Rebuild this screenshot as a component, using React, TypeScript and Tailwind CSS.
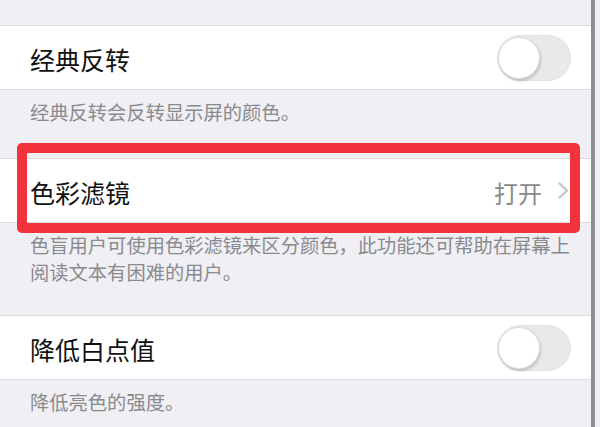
import React from "react";

const FONT = { fontFamily: '"Noto Sans CJK SC", "Noto Sans", sans-serif' };

function Toggle() {
  return (
    <div className="relative w-[74px] h-[46px] rounded-full bg-[#e9e9eb] border border-[#e2e2e5]">
      <div className="absolute left-0 top-[1px] w-[42px] h-[42px] rounded-full bg-white border border-[#dcdcdf] shadow-[1px_2px_3px_rgba(0,0,0,0.18)]" />
    </div>
  );
}

function Row({ label, children }: { label: string; children?: React.ReactNode }) {
  return (
    <div className="h-[65px] shrink-0 bg-white border-y border-[#dcdce0] flex items-center pl-[30px] pr-[20px]">
      <span className="flex-1 text-[25px] leading-none text-[#111] pt-[4px]">{label}</span>
      {children}
    </div>
  );
}

function Caption({ lines, height }: { lines: string[]; height: string }) {
  return (
    <div className={`${height} pl-[30px] pt-[9px] text-[19.3px] leading-[27px] text-[#8a8a8e] whitespace-nowrap`}>
      {lines.map((l) => (
        <div key={l}>{l}</div>
      ))}
    </div>
  );
}

export default function App() {
  return (
    <div className="w-[600px] h-[427px] overflow-hidden bg-[#efeff4] flex" style={FONT}>
      <div className="w-[591px] shrink-0 flex flex-col">
        <div className="h-[25px] shrink-0" />
        <Row label="经典反转">
          <Toggle />
        </Row>
        <Caption height="h-[68px] shrink-0" lines={["经典反转会反转显示屏的颜色。"]} />

        {/* highlighted row */}
        <div className="relative shrink-0">
          <Row label="色彩滤镜">
            <span className="text-[24px] leading-none text-[#8a8a8e] pt-[4px] mr-[16px]">打开</span>
            <svg width="11" height="17" viewBox="0 0 11 17" className="mr-[2px]">
              <path d="M1.5 1.5 L9 8.5 L1.5 15.5" fill="none" stroke="#c4c4c8" strokeWidth="2.2" strokeLinecap="round" strokeLinejoin="round" />
            </svg>
          </Row>
          <div className="absolute left-[17px] right-[11px] top-[-15px] bottom-[-10px] border-[10px] border-[#f3323c] rounded-[5px] pointer-events-none" />
        </div>
        <Caption
          height="h-[92px] shrink-0"
          lines={["色盲用户可使用色彩滤镜来区分颜色，此功能还可帮助在屏幕上", "阅读文本有困难的用户。"]}
        />

        <Row label="降低白点值">
          <Toggle />
        </Row>
        <Caption height="flex-1" lines={["降低亮色的强度。"]} />
      </div>
      {/* scroll indicator */}
      <div className="w-[4px] shrink-0 self-stretch bg-[#8e8e93]" />
    </div>
  );
}
